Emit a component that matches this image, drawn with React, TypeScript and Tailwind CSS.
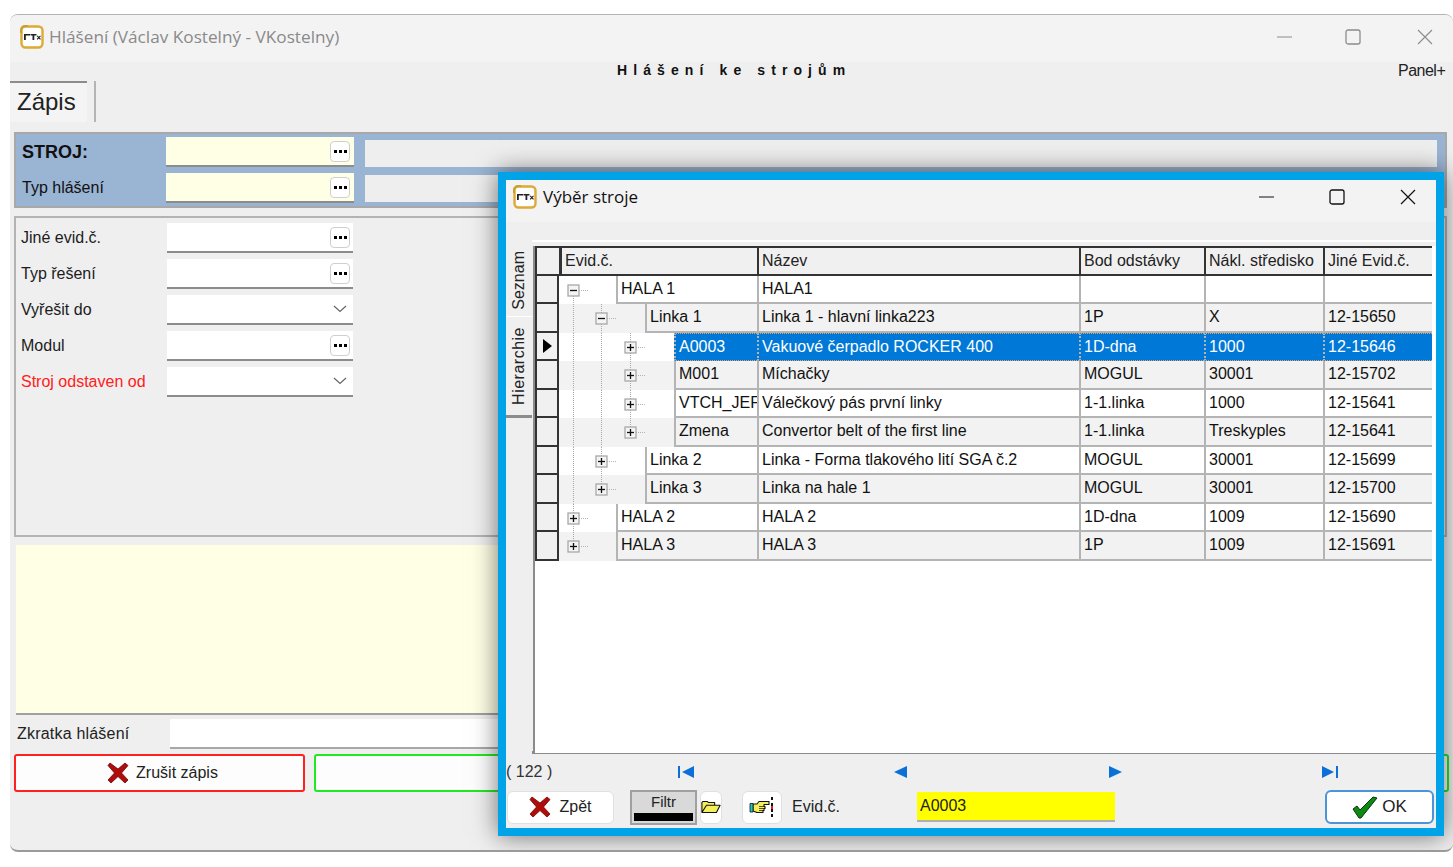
import type { ReactNode } from 'react';

const rows = [
  { level: 0, open: true, evid: 'HALA 1', name: 'HALA1', bod: '', nakl: '', jine: '', lines: [[14, 14, 28.5]] },
  { level: 1, open: true, evid: 'Linka 1', name: 'Linka 1 - hlavní linka223', bod: '1P', nakl: 'X', jine: '12-15650', lines: [[14, 0, 28.5], [42, 0, 28.5]] },
  { level: 2, open: false, evid: 'A0003', name: 'Vakuové čerpadlo ROCKER 400', bod: '1D-dna', nakl: '1000', jine: '12-15646', lines: [[14, 0, 28.5], [42, 0, 28.5], [71, 0, 28.5]] },
  { level: 2, open: false, evid: 'M001', name: 'Míchačky', bod: 'MOGUL', nakl: '30001', jine: '12-15702', lines: [[14, 0, 28.5], [42, 0, 28.5], [71, 0, 28.5]] },
  { level: 2, open: false, evid: 'VTCH_JEF', name: 'Válečkový pás první linky', bod: '1-1.linka', nakl: '1000', jine: '12-15641', lines: [[14, 0, 28.5], [42, 0, 28.5], [71, 0, 28.5]] },
  { level: 2, open: false, evid: 'Zmena', name: 'Convertor belt of the first line', bod: '1-1.linka', nakl: 'Treskyples', jine: '12-15641', lines: [[14, 0, 28.5], [42, 0, 28.5], [71, 0, 14]] },
  { level: 1, open: false, evid: 'Linka 2', name: 'Linka - Forma tlakového lití SGA č.2', bod: 'MOGUL', nakl: '30001', jine: '12-15699', lines: [[14, 0, 28.5], [42, 0, 28.5]] },
  { level: 1, open: false, evid: 'Linka 3', name: 'Linka na hale 1', bod: 'MOGUL', nakl: '30001', jine: '12-15700', lines: [[14, 0, 28.5], [42, 0, 14]] },
  { level: 0, open: false, evid: 'HALA 2', name: 'HALA 2', bod: '1D-dna', nakl: '1009', jine: '12-15690', lines: [[14, 0, 28.5]] },
  { level: 0, open: false, evid: 'HALA 3', name: 'HALA 3', bod: '1P', nakl: '1009', jine: '12-15691', lines: [[14, 0, 14]] },
];

function Logo() {
  return (
    <svg width="24" height="24" viewBox="0 0 24 24" className="shrink-0">
      <rect x="1.5" y="1.5" width="21" height="21" rx="4" fill="#fff" stroke="#dcaa35" strokeWidth="2.4" />
      <path d="M1 8V5a4 4 0 0 1 4-4h3" fill="none" stroke="#c9a030" strokeWidth="2" />
      <path d="M4 9h6v1.600H5.800V15H4zM10.500 9h6v1.600h-2.200V15h-1.800v-4.400h-2zM17.500 10.500l1.300 1.300 1.300-1.300.8.700-1.400 1.400 1.400 1.500-.8.700-1.300-1.400-1.300 1.400-.8-.7 1.400-1.500-1.400-1.400z" fill="#222" />
    </svg>
  );
}

function RedX({ size = 22 }: { size?: number }) {
  return (
    <svg width={size} height={size} viewBox="0 0 22 22" className="shrink-0">
      <path d="M3 1l8 6 7-6 3 2.500-6.500 7.500L21 18l-3 3-7-6.500L4 21l-3-3 6.500-7L1 3.500z" fill="#b00c0c" stroke="#6d0606" strokeWidth="0.8" />
    </svg>
  );
}

function Dots() {
  return (
    <span className="flex h-[21px] w-[20px] items-center justify-center gap-[2px] rounded-[4px] border border-[#cfcfcf] bg-white">
      <span className="h-[3px] w-[3px] bg-black" />
      <span className="h-[3px] w-[3px] bg-black" />
      <span className="h-[3px] w-[3px] bg-black" />
    </span>
  );
}

function Chevron() {
  return (
    <svg width="14" height="8" viewBox="0 0 14 8" className="mr-[3px]">
      <path d="M1 1l6 5.500L13 1" fill="none" stroke="#666" strokeWidth="1.200" />
    </svg>
  );
}

function Field({ yellow, children }: { yellow?: boolean; children?: ReactNode }) {
  return (
    <div className={`flex h-[30px] items-center justify-end border-b-2 border-[#8c8c8c] ${yellow ? 'w-[188px] bg-[#ffffe6] pr-[4px]' : 'w-[186px] bg-white pr-[3px]'}`}>
      {children}
    </div>
  );
}

function FormRow({ label, red, children }: { label: string; red?: boolean; children?: ReactNode }) {
  return (
    <div className="flex items-center">
      <span className={`w-[151px] pl-[5px] text-[16px] ${red ? 'text-[#ff2020]' : 'text-[#1c1c1c]'}`}>{label}</span>
      <Field>{children}</Field>
    </div>
  );
}

function TreeIndent({ level, open, lines }: { level: number; open: boolean; lines: number[][] }) {
  const cx = level === 0 ? 14 : level === 1 ? 42 : 71;
  const width = level === 0 ? 57 : level === 1 ? 86 : 115;
  return (
    <svg width={width} height="28.5" className="block shrink-0">
      {lines.map((l, i) => (
        <line key={i} x1={l[0] + 0.5} x2={l[0] + 0.5} y1={l[1]} y2={l[2]} stroke="#a8a8a8" strokeDasharray="1 1" />
      ))}
      <line x1={cx + 6} x2={cx + 15} y1="14.5" y2="14.500" stroke="#b4b4b4" strokeDasharray="1 1" />
      <rect x={cx - 5} y="9" width="11" height="11" fill="#f4f4f4" stroke="#a8a8a8" strokeWidth="1.300" />
      <line x1={cx - 3} x2={cx + 4} y1="14.500" y2="14.500" stroke="#111" strokeWidth="1.300" />
      {!open && <line x1={cx + 0.5} x2={cx + 0.5} y1="11" y2="18" stroke="#111" strokeWidth="1.300" />}
    </svg>
  );
}

function GridRow({ row, index }: { row: (typeof rows)[number]; index: number }) {
  const selected = index === 2;
  const stripe = index % 2 === 0 ? 'bg-white' : 'bg-[#f2f2f2]';
  const cellBg = selected ? 'bg-[#0078d7] text-white border-y border-dotted border-y-[#e8a060]' : `${stripe} border-b-2 border-b-[#b4b4b4]`;
  const cell = `flex h-[28.5px] items-center overflow-hidden whitespace-nowrap border-l-2 border-l-[#b4b4b4] pl-[3px] ${cellBg}`;
  return (
    <div className="flex">
      <div className="flex h-[28.5px] w-[24px] shrink-0 items-center justify-center border-x-2 border-b-2 border-[#333] bg-[#f0f0f0]">
        {selected && (
          <svg width="9" height="14" viewBox="0 0 9 14">
            <path d="M0 0l9 7-9 7z" fill="#000" />
          </svg>
        )}
      </div>
      <div className="flex w-[198px] shrink-0">
        <div className={index % 2 === 0 || selected ? 'bg-white' : 'bg-[#f2f2f2]'}>
          <TreeIndent level={row.level} open={row.open} lines={row.lines} />
        </div>
        <div className={`${cell} min-w-0 flex-1`}>{row.evid}</div>
      </div>
      <div className={`${cell} w-[322px] shrink-0`}>{row.name}</div>
      <div className={`${cell} w-[125px] shrink-0`}>{row.bod}</div>
      <div className={`${cell} w-[119px] shrink-0`}>{row.nakl}</div>
      <div className={`${cell} w-[109px] shrink-0`}>{row.jine}</div>
    </div>
  );
}

function HeadCell({ w, children }: { w: string; children?: ReactNode }) {
  return <div className={`flex h-[25.5px] shrink-0 items-center border-l-2 border-[#333] pl-[3px] ${w}`}>{children}</div>;
}

function NavIcon({ type }: { type: 'first' | 'prev' | 'next' | 'last' }) {
  return (
    <svg width="18" height="14" viewBox="0 0 18 14">
      {type === 'first' && <path d="M1 1h2v12H1zM17 1v12L5 7z" fill="#0b6fd8" />}
      {type === 'prev' && <path d="M15 1v12L2 7z" fill="#0b6fd8" />}
      {type === 'next' && <path d="M3 1v12l13-6z" fill="#0b6fd8" />}
      {type === 'last' && <path d="M15 1h2v12h-2zM1 1v12l12-6z" fill="#0b6fd8" />}
    </svg>
  );
}

function WhiteBtn({ className, children }: { className: string; children: ReactNode }) {
  return <div className={`flex items-center justify-center rounded-[6px] border border-[#e0e0e0] bg-white ${className}`}>{children}</div>;
}

function Dialog() {
  return (
    <div className="absolute left-[488px] top-[157px] flex h-[664px] w-[946px] flex-col border-[8px] border-[#00a2e8] bg-[#efefef] shadow-[0_0_24px_rgba(0,0,0,0.55)]">
      <div className="flex h-[42px] shrink-0 items-center bg-[#f3f3f3] pb-[8px] pl-[7px]">
        <Logo />
        <span className="ml-[6px] flex-1 [font-family:Open_Sans,sans-serif] text-[17px] text-[#111]">Výběr stroje</span>
        <div className="flex items-center">
          <svg width="16" height="16" viewBox="0 0 16 16" className="mr-[54px]"><path d="M0 8h15" stroke="#111" /></svg>
          <svg width="16" height="16" viewBox="0 0 16 16" className="mr-[55px]"><rect x="1" y="1" width="14" height="14" rx="2" fill="none" stroke="#111" strokeWidth="1.300" /></svg>
          <svg width="16" height="16" viewBox="0 0 16 16" className="mr-[20px]"><path d="M1 1l14 14M15 1L1 15" stroke="#111" strokeWidth="1.200" /></svg>
        </div>
      </div>
      <div className="flex h-[532px] shrink-0 pt-[18px]">
        <div className="flex w-[26px] shrink-0 flex-col text-[16px] text-[#222]">
          <div className="flex h-[77px] items-center justify-center border-b border-white pt-1">
            <span className="rotate-180 [writing-mode:vertical-rl]">Seznam</span>
          </div>
          <div className="flex h-[101px] items-center justify-center border-b-[3px] border-[#8c8c8c]">
            <span className="rotate-180 tracking-[0.5px] [writing-mode:vertical-rl]">Hierarchie</span>
          </div>
        </div>
        <div className="w-[905px] border-t-2 border-b-[3px] border-t-white border-b-[#8a8a8a] pl-[1px] pt-[4px]">
          <div className="flex h-[507px] flex-col border-l-2 border-[#8c8c8c] bg-white text-[16px] text-[#111]">
            <div className="flex w-[897px] border-y-2 border-[#333] bg-[#f0f0f0] text-[#222]">
              <HeadCell w="w-[24px]" />
              <HeadCell w="w-[198px] border-l-[3px]">Evid.č.</HeadCell>
              <HeadCell w="w-[322px]">Název</HeadCell>
              <HeadCell w="w-[125px]">Bod odstávky</HeadCell>
              <HeadCell w="w-[119px]">Nákl. středisko</HeadCell>
              <HeadCell w="w-[109px]">Jiné Evid.č.</HeadCell>
            </div>
            {rows.map((row, i) => (
              <GridRow key={row.evid} row={row} index={i} />
            ))}
          </div>
        </div>
      </div>
      <div className="flex h-[36px] shrink-0 items-center text-[16px] text-[#333]">
        <span className="w-[171px]">( 122 )</span>
        <NavIcon type="first" />
        <span className="w-[197px]" />
        <NavIcon type="prev" />
        <span className="w-[196px]" />
        <NavIcon type="next" />
        <span className="w-[197px]" />
        <NavIcon type="last" />
      </div>
      <div className="flex h-[38px] shrink-0 items-center pb-[4px] text-[16px] text-[#222]">
        <WhiteBtn className="ml-[1px] h-[33px] w-[107px] gap-[8px]">
          <RedX />
          <span>Zpět</span>
        </WhiteBtn>
        <div className="ml-[16px] flex h-[35px] w-[67px] flex-col items-center border-2 border-[#a0a0a0] bg-[#d9d9d9] px-[2px] text-[15px] leading-[20px]">
          <span>Filtr</span>
          <span className="mt-px h-[8px] w-full bg-black" />
        </div>
        <WhiteBtn className="ml-[3px] h-[33px] w-[22px]">
          <svg width="22" height="16" viewBox="0 0 22 16">
            <path d="M1 14V3l1-1h5l1 1h7v3H6L1 14zM1 14l5-8h15l-4 8z" fill="#f3ee5a" stroke="#111" strokeWidth="1.200" strokeLinejoin="round" />
          </svg>
        </WhiteBtn>
        <WhiteBtn className="ml-[20px] h-[33px] w-[40px]">
          <svg width="26" height="22" viewBox="0 0 26 22">
            <path d="M4 8h4l2-2.500h10v3h-5v2h1v2h-1v2h-1v2H8l-4-1.500z" fill="#f5f05a" stroke="#111" strokeWidth="1.100" strokeLinejoin="round" />
            <path d="M1 7.500h3V16H1z" fill="#1ec8c8" stroke="#111" strokeWidth="0.800" />
            <path d="M10 10.500h5M10 12.500h5M10 14.500h4" stroke="#111" strokeWidth="0.700" />
            <path d="M23 1v3M23 7v3M23 13v3M23 18v3" stroke="#111" strokeWidth="2" />
            <path d="M23 10v3" stroke="#e02020" strokeWidth="2" />
          </svg>
        </WhiteBtn>
        <span className="ml-[10px] w-[125px]">Evid.č.</span>
        <div className="flex h-[30px] w-[198px] items-center border-b-2 border-[#b0b0b0] bg-[#ffff00] pl-[3px]">A0003</div>
        <div className="ml-[210px] flex h-[34px] w-[109px] items-center justify-center gap-[4px] rounded-[6px] border-2 border-[#4a94d8] bg-white text-[17px]">
          <svg width="26" height="24" viewBox="0 0 26 24">
            <path d="M1 14l4-3 3 4L21 2l4 1L9 23h-2z" fill="#0d8a12" stroke="#08360a" strokeWidth="1" strokeLinejoin="round" />
          </svg>
          <span>OK</span>
        </div>
      </div>
    </div>
  );
}

export default function App() {
  return (
    <div className="h-[867px] w-[1453px] overflow-hidden bg-white pl-[10px] pt-[14px] [font-family:Liberation_Sans,sans-serif]">
      <div className="relative flex h-[838px] w-[1443px] flex-col overflow-hidden rounded-t-[8px] rounded-b-[8px] border-t border-b-2 border-t-[#b4b4b4] border-b-[#9a9a9a] bg-[#efefef]">
        <div className="flex h-[47px] shrink-0 items-center bg-[#f3f3f3] pb-[4px] pl-[10px]">
          <Logo />
          <span className="ml-[5px] flex-1 [font-family:Open_Sans,sans-serif] text-[17.2px] text-[#8a8a8a]">Hlášení (Václav Kostelný - VKostelny)</span>
          <svg width="16" height="16" viewBox="0 0 16 16" className="mr-[52px]"><path d="M0 8h15" stroke="#8c8c8c" /></svg>
          <svg width="16" height="16" viewBox="0 0 16 16" className="mr-[56px]"><rect x="1" y="1" width="14" height="14" rx="2" fill="none" stroke="#8c8c8c" strokeWidth="1.300" /></svg>
          <svg width="16" height="16" viewBox="0 0 16 16" className="mr-[20px]"><path d="M1 1l14 14M15 1L1 15" stroke="#8c8c8c" strokeWidth="1.100" /></svg>
        </div>
        <div className="flex h-[19px] shrink-0 items-start">
          <span className="ml-[607px] w-[781px] text-[14px] font-bold leading-[17px] tracking-[6.1px] text-[#111]">Hlášení ke strojům</span>
          <span className="text-[16px] leading-[17px] tracking-[-0.5px] text-[#222]">Panel+</span>
        </div>
        <div className="flex h-[41px] shrink-0">
          <div className="flex w-[77px] items-center border-t-2 border-[#8c8c8c] bg-[#f4f4f4] pb-[2px] pl-[7px] text-[24px] text-[#222]">Zápis</div>
          <div className="ml-[7px] w-[2px] bg-[#b4b4b4]" />
        </div>
        <div className="ml-[4px] mt-[10px] flex h-[76px] w-[1433px] shrink-0 flex-col gap-[6px] border-2 border-[#a8a8a8] bg-[#9ab4d3] pt-[3px]">
          <div className="flex items-center">
            <span className="w-[150px] pl-[6px] pt-[1px] text-[18px] font-bold text-[#111]">STROJ:</span>
            <Field yellow><Dots /></Field>
            <div className="ml-[11px] mt-[3px] h-[27px] w-[1072px] bg-[#eeeeee]" />
          </div>
          <div className="flex items-center">
            <span className="w-[150px] pl-[6px] text-[16px] text-[#111]">Typ hlášení</span>
            <Field yellow><Dots /></Field>
            <div className="ml-[11px] h-[27px] w-[1072px] bg-[#eeeeee]" />
          </div>
        </div>
        <div className="ml-[4px] mt-[8px] flex h-[321px] w-[1433px] shrink-0 flex-col gap-[6px] border-2 border-[#b4b4b4] pt-[5px]">
          <FormRow label="Jiné evid.č."><Dots /></FormRow>
          <FormRow label="Typ řešení"><Dots /></FormRow>
          <FormRow label="Vyřešit do"><Chevron /></FormRow>
          <FormRow label="Modul"><Dots /></FormRow>
          <FormRow label="Stroj odstaven od" red><Chevron /></FormRow>
        </div>
        <div className="ml-[6px] mt-[8px] h-[170px] w-[1428px] shrink-0 border-b-2 border-[#a0a0a0] bg-[#ffffe6]" />
        <div className="mt-[4px] flex h-[30px] shrink-0 items-center">
          <span className="w-[160px] pl-[7px] text-[16px] tracking-[0.2px] text-[#222]">Zkratka hlášení</span>
          <div className="h-full w-[1270px] border-b-2 border-[#a8a8a8] bg-white" />
        </div>
        <div className="ml-[4px] mt-[5px] flex h-[38px] shrink-0 gap-[9px]">
          <div className="flex w-[291px] items-center justify-center gap-[7px] rounded-[3px] border-2 border-[#ff2020] bg-[#fdfdfd] pl-[6px] text-[16px] text-[#222]">
            <RedX />
            <span>Zrušit zápis</span>
          </div>
          <div className="w-[1135px] rounded-[3px] border-2 border-[#22e822] bg-[#fdfdfd]" />
        </div>
        <Dialog />
      </div>
    </div>
  );
}
